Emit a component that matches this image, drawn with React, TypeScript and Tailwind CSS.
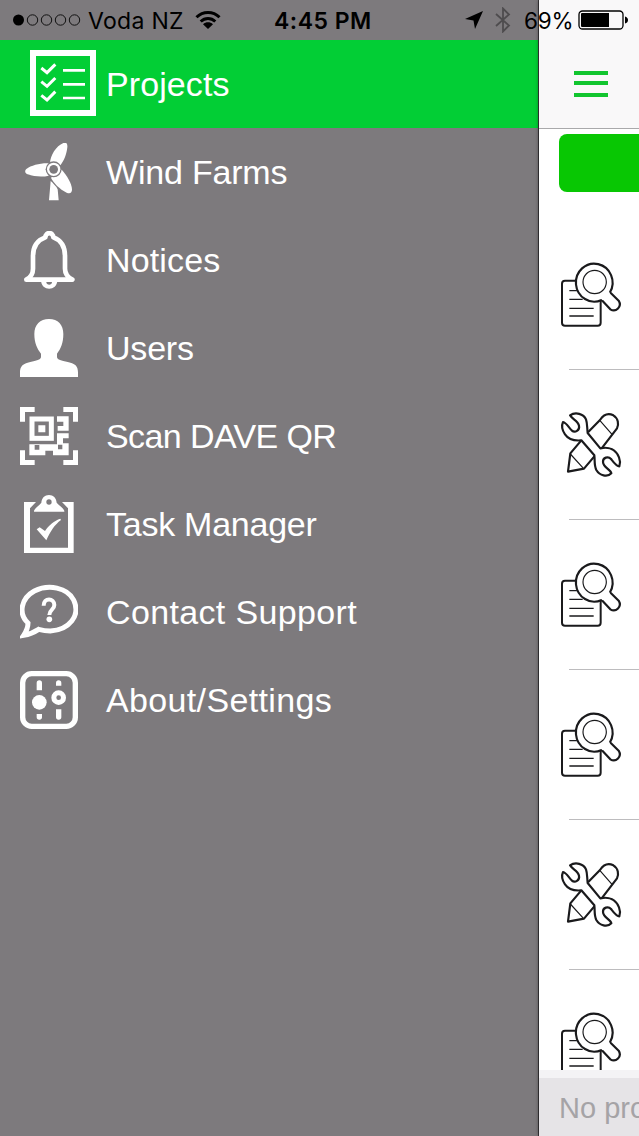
import type { ReactNode } from "react";

const menuItems = [
  { label: "Wind Farms", icon: <WindIcon />, tracking: "tracking-[-0.2px]" },
  { label: "Notices", icon: <BellIcon />, tracking: "tracking-[0.15px]" },
  { label: "Users", icon: <UserIcon />, tracking: "tracking-[-0.2px]" },
  { label: "Scan DAVE QR", icon: <QrIcon />, tracking: "tracking-[-0.6px]" },
  { label: "Task Manager", icon: <TaskIcon />, tracking: "tracking-[-0.25px]" },
  { label: "Contact Support", icon: <SupportIcon />, tracking: "tracking-[0.35px]" },
  { label: "About/Settings", icon: <SettingsIcon />, tracking: "tracking-[0.35px]" },
];

const rows = ["inspect", "repair", "inspect", "inspect", "repair", "inspect"] as const;

function MenuSvg({ viewBox, children }: { viewBox: string; children: ReactNode }) {
  return (
    <svg viewBox={viewBox} className="h-[58px] w-[58px] shrink-0" fill="none">
      {children}
    </svg>
  );
}

function ProjectsIcon() {
  return (
    <svg viewBox="90 150 198 198" className="mb-0.5 h-[66px] w-[66px] shrink-0" fill="none" stroke="#fff">
      <rect x="99" y="159" width="180" height="180" strokeWidth="18" />
      <path
        d="M124 204l17 14 25-25M124 245l17 14 25-25M124 286l17 14 25-25"
        strokeWidth="9"
      />
      <path d="M189 211h66M189 253h66M189 294h66" strokeWidth="8" />
    </svg>
  );
}

function WindIcon() {
  return (
    <MenuSvg viewBox="60 39 174 174">
      <g fill="#fff">
        <path d="M150 100C151 76 168 48 190 39C199 35 203 42 202 52C200 72 192 93 181 106Z" />
        <path d="M146 100C120 99 94 106 79 117C73 123 75 130 83 133C103 140 127 142 146 137Z" />
        <path d="M184 118C201 137 215 161 216 178C216 190 209 192 200 188C179 178 160 158 153 143Z" />
        <path d="M152 153Q157 157 163 164Q172 172 173 178L176 211H147Z" />
      </g>
      <circle cx="161" cy="118" r="24" fill="#7d7a7d" />
      <circle cx="161" cy="118" r="20" fill="#fff" />
      <circle cx="161" cy="118" r="13" fill="#7d7a7d" />
    </MenuSvg>
  );
}

function BellIcon() {
  return (
    <MenuSvg viewBox="60 303 174 174">
      <path
        d="M79 449C94 441 99 432 99 416V378C99 350 113 330 136 322C137 305 159 305 160 322C183 330 195 350 195 378V416C195 432 202 441 217 449Z"
        stroke="#fff"
        strokeWidth="14"
        strokeLinejoin="round"
      />
      <path d="M148 318V331" stroke="#7d7a7d" strokeWidth="3" />
      <path d="M123 451H172C171 485 124 485 123 451Z" fill="#fff" />
      <path d="M139 456H156C156 467 139 467 139 456Z" fill="#7d7a7d" />
    </MenuSvg>
  );
}

function UserIcon() {
  return (
    <MenuSvg viewBox="60 42 174 174">
      <path
        d="M147 42C174 42 190 59 190 87C190 115 182 132 171 146V155C171 163 181 166 200 170C226 175 234 183 234 202V216H60V202C60 183 69 175 94 170C112 166 123 163 123 155V146C112 132 103 115 103 87C103 59 120 42 147 42Z"
        fill="#fff"
      />
    </MenuSvg>
  );
}

function QrIcon() {
  return (
    <MenuSvg viewBox="60 306 174 174">
      <path
        d="M104 313.500H67.500V350M190 313.500H226.500V350M67.500 436V472.500H104M226.500 436V472.500H190"
        stroke="#fff"
        strokeWidth="15"
      />
      <rect x="96" y="342" width="58" height="58" stroke="#fff" strokeWidth="15" />
      <path
        d="M115 361H136V382H115ZM171 334H206V377H173V363H190V350H171ZM171 385H206V400H189V415H206V451H159V437H136V451H88V418H171Z"
        fill="#fff"
      />
      <path d="M104 420H118V434H104ZM174 419H187V433H174Z" fill="#7d7a7d" />
    </MenuSvg>
  );
}

function TaskIcon() {
  return (
    <MenuSvg viewBox="60 30 174 174">
      <path d="M72 51H108L90 70V188H204V70L186 51H221V204H72Z" fill="#fff" />
      <path
        d="M102 80C101 72 116 63 124 53C125 39 134 30 147 30C160 30 169 39 170 53C179 63 194 72 193 80Z"
        fill="#fff"
      />
      <circle cx="147" cy="51" r="8" fill="#7d7a7d" />
      <path d="M110 133L119 127L135 138C146 121 163 107 181 101L183 105C164 119 151 139 139 166Z" fill="#fff" />
    </MenuSvg>
  );
}

function SupportIcon() {
  return (
    <MenuSvg viewBox="60 294 174 174">
      <path
        d="M84 414C54 386 63 340 103 318C145 297 202 307 221 345C243 392 207 435 151 438C140 438 127 436 116 433C104 441 89 448 71 451C79 439 84 428 84 414Z"
        stroke="#fff"
        strokeWidth="15"
      />
      <path
        d="M131 362C131 337 163 338 163 360C163 375 148 373 148 390"
        stroke="#fff"
        strokeWidth="12"
      />
      <circle cx="148" cy="403" r="8.500" fill="#fff" />
    </MenuSvg>
  );
}

function SettingsIcon() {
  return (
    <MenuSvg viewBox="60 48 174 174">
      <rect x="68" y="56" width="158" height="158" rx="27" stroke="#fff" strokeWidth="16" />
      <path
        d="M110 106V84Q110 76 118 76Q126 76 126 84V106ZM110 177H126V187Q126 194 118 194Q110 194 110 187ZM168 92V84Q168 76 176 76Q184 76 184 84V92ZM168 163H184V187Q184 194 176 194Q168 194 168 187Z"
        fill="#fff"
      />
      <circle cx="118" cy="142" r="22" fill="#fff" />
      <circle cx="176" cy="128" r="14.500" stroke="#fff" strokeWidth="15" />
    </MenuSvg>
  );
}

function InspectIcon() {
  return (
    <svg
      viewBox="96 66 180 195"
      className="h-[65px] w-[60px] shrink-0 overflow-visible"
      fill="none"
      stroke="#1a1a1c"
      strokeLinejoin="round"
    >
      <rect x="99" y="122" width="116" height="135" rx="9" strokeWidth="6" />
      <path d="M121 152h30M121 178h40M121 205h73M121 228h73" strokeWidth="4" />
      <circle cx="197" cy="126" r="59" fill="#fff" stroke="none" />
      <path
        d="M243 157A55 57 0 1 0 218 180L244 208C261 218 280 200 269 182Z"
        fill="#fff"
        strokeWidth="6.500"
      />
      <path d="M241 157L218 178" stroke="#fff" strokeWidth="7" />
      <circle cx="197" cy="126" r="35" strokeWidth="3.500" />
    </svg>
  );
}

function RepairIcon() {
  return (
    <svg
      viewBox="96 66 180 195"
      className="h-[65px] w-[60px] shrink-0 overflow-visible"
      fill="none"
      stroke="#1a1a1c"
      strokeWidth="6.500"
      strokeLinejoin="round"
    >
      <path d="M123 76C139 65 164 71 171 88C175 99 174 112 176 129L214 175C241 169 261 180 270 202C275 214 273 223 271 229C262 229 253 216 246 207C238 198 221 202 222 216C222 232 246 239 247 250C235 263 212 257 202 240C195 226 198 213 196 196L157 151C137 153 119 149 108 133C99 120 98 105 102 96C112 98 119 112 128 121C138 130 153 121 150 107C147 93 129 87 123 76Z" />
      <path d="M177 127L213 90C223 75 237 68 253 76C268 85 270 103 264 115L218 175" />
      <path d="M157 151L124 190L117 245L165 236L196 199" />
      <path d="M213 92L249 133M124 192L164 236" strokeWidth="3.500" />
    </svg>
  );
}

function StatusBar() {
  return (
    <div className="absolute inset-x-0 top-0 flex h-10 items-center font-['Inter',sans-serif] text-black">
      <svg viewBox="0 0 68 14" className="ml-[13px] h-[14px] w-[68px]" fill="none" stroke="#111">
        <circle cx="5.500" cy="7" r="5.500" fill="#000" stroke="none" />
        <circle cx="19.500" cy="7" r="5.200" />
        <circle cx="33.500" cy="7" r="5.200" />
        <circle cx="47.500" cy="7" r="5.200" />
        <circle cx="61.500" cy="7" r="5.200" />
      </svg>
      <span className="ml-[7px] w-[107px] whitespace-nowrap pt-0.5 text-[23px] tracking-[0.3px]">Voda NZ</span>
      <svg viewBox="0 0 26 20" className="h-5 w-[26px]" fill="none" stroke="#000" strokeWidth="3">
        <path d="M1.500 7.200C8 .8 18 .8 24.500 7.200M5.700 11.500C10 7.500 16 7.500 20.300 11.500" />
        <path d="M8 14.200C11 11.700 15 11.700 18 14.200L13 19Z" fill="#000" stroke="none" />
      </svg>
      <span className="ml-[53px] w-[100px] whitespace-nowrap pt-0.5 text-[23px] font-semibold tracking-[0.5px]">4:45 PM</span>
      <svg viewBox="0 0 18 18" className="ml-[91px] h-[18px] w-[18px]">
        <path d="M18 0L10 18L8.500 9.500L0 8Z" />
      </svg>
      <svg viewBox="0 0 16 26" className="ml-3 h-[26px] w-4" fill="none" stroke="#4e4c4e" strokeWidth="1.800">
        <path d="M1 7L14 18.500L8 24.500V1.500L14 7.500L1 19" />
      </svg>
      <span className="ml-[13px] w-[54px] whitespace-nowrap pt-0.5 text-[22.5px] tracking-[-0.2px]">69%</span>
      <svg viewBox="0 0 50 20" className="h-5 w-[50px]">
        <rect x="1" y="1" width="44" height="18" rx="3.500" fill="none" stroke="#000" strokeWidth="1.300" />
        <path d="M4 3H31V17H4Q3 17 3 16V4Q3 3 4 3ZM47 6.500Q50 7.500 50 10Q50 12.500 47 13.500Z" />
      </svg>
    </div>
  );
}

export default function App() {
  return (
    <div className="relative flex h-[1136px] w-[639px] overflow-hidden bg-white font-['Liberation_Sans',Arial,sans-serif]">
      <nav className="flex w-[539px] shrink-0 flex-col border-r border-[#39373a] bg-[#7d7a7d] pt-10 text-[34px] text-white">
        <div className="flex h-[88px] items-center gap-2.5 bg-[#02ce35] pl-[30px]">
          <ProjectsIcon />
          <span className="tracking-[0.1px]">Projects</span>
        </div>
        {menuItems.map((item) => (
          <div key={item.label} className="flex h-[88px] items-center gap-7 pl-5">
            {item.icon}
            <span className={`whitespace-nowrap ${item.tracking}`}>{item.label}</span>
          </div>
        ))}
      </nav>

      <main className="flex h-full w-[100px] shrink-0 flex-col overflow-hidden bg-white shadow-[0_0_4px_rgba(0,0,0,0.5)]">
        <header className="h-[129px] shrink-0 border-b border-[#a9a9ab] bg-[#f9f8f9] pl-[35px] pt-[71px]">
          <div className="h-1 w-[34px] bg-[#12c52f]" />
          <div className="mt-1.5 h-1 w-[34px] bg-[#12c52f]" />
          <div className="mt-2 h-1 w-[34px] bg-[#12c52f]" />
        </header>
        <div className="ml-5 mt-[5px] h-[58px] w-[120px] shrink-0 rounded-lg bg-[#08c703]" />
        <ul className="mt-7 h-[850px] shrink-0 overflow-hidden">
          {rows.map((kind, i) => (
            <li key={i} className="flex h-[150px] flex-col">
              <div className="flex-1 pl-[22px] pt-[42px]">
                {kind === "inspect" ? <InspectIcon /> : <RepairIcon />}
              </div>
              <div className="ml-[30px] h-px bg-[#bdbcbe]" />
            </li>
          ))}
        </ul>
        <footer className="flex h-[66px] shrink-0 items-center border-t-8 border-[#f4f3f5] bg-[#e6e4e7] pl-5 pt-1 text-[29px] text-[#a5a3a6]">
          <span className="whitespace-nowrap">No projects</span>
        </footer>
      </main>

      <StatusBar />
    </div>
  );
}
